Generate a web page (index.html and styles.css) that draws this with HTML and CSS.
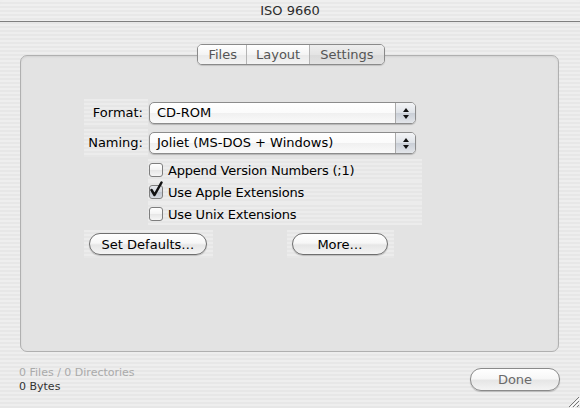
FILE: index.html
```html
<!DOCTYPE html>
<html lang="en">
<head>
    <meta charset="UTF-8">
    <title>ISO 9660</title>
    <link rel="stylesheet" href="styles.css">
</head>
<body>
<div class="window">
    <div class="titlebar">ISO 9660</div>

    <div class="tabs">
        <div class="tab">Files</div>
        <div class="tab">Layout</div>
        <div class="tab now">Settings</div>
    </div>

    <div class="group">
        <div class="form">
            <div class="label pin">Format:</div>
            <div class="field">
                <div class="popup">
                    <span class="value">CD-ROM</span>
                    <span class="arrows"><i class="up"></i><i class="down"></i></span>
                </div>
            </div>

            <div class="label pin">Naming:</div>
            <div class="field">
                <div class="popup">
                    <span class="value">Joliet (MS-DOS + Windows)</span>
                    <span class="arrows"><i class="up"></i><i class="down"></i></span>
                </div>
            </div>

            <div></div>
            <div class="checks">
                <label class="check pin"><span class="box"></span>Append Version Numbers (;1)</label>
                <label class="check pin"><span class="box on">
                    <svg width="15" height="17" viewBox="0 0 15 17"><path d="M2.5 9 L5.5 14 L12.5 1.5" fill="none" stroke="#111" stroke-width="2.5" stroke-linecap="round" stroke-linejoin="round"/></svg>
                </span>Use Apple Extensions</label>
                <label class="check pin"><span class="box"></span>Use Unix Extensions</label>
            </div>
        </div>

        <div class="actions">
            <div class="cell pin"><button class="btn defaults">Set Defaults…</button></div>
            <div class="cell pin"><button class="btn more">More…</button></div>
        </div>
    </div>

    <div class="footer">
        <div class="status">
            <div class="dim">0 Files / 0 Directories</div>
            <div>0 Bytes</div>
        </div>
        <button class="btn done">Done</button>
    </div>

    <!-- size grip in the corner -->
    <svg class="grip" width="14" height="14" viewBox="0 0 14 14">
        <path d="M13 3 L3 13 M13 7 L7 13 M13 11 L11 13" stroke="#777" stroke-width="1"/>
        <path d="M14 4 L4 14 M14 8 L8 14" stroke="#fff" stroke-width="1"/>
    </svg>
</div>
</body>
</html>
```

FILE: styles.css
```css
body{
    margin: 0;
    font-family: "DejaVu Sans", sans-serif;
    font-size: 12px;
    color: #000;
}
button{
    font-family: inherit;
}

/* 窗口 + 细条纹背景 */
.window{
    width: 580px;
    height: 408px;
    position: relative;
    overflow: hidden;
    display: flex;
    flex-direction: column;
    background: repeating-linear-gradient(to bottom, #eeeeee 0, #eeeeee 2px, #e7e7e7 2px, #e7e7e7 4px);
}
.pin{
    background: repeating-linear-gradient(to bottom, #ececec 0, #ececec 2px, #e6e6e6 2px, #e6e6e6 4px);
}

.titlebar{
    height: 21px;
    line-height: 21px;
    text-align: center;
    font-size: 13px;
    color: #2c2c2c;
    border-bottom: 1px solid #7f7f7f;
    border-radius: 5px 5px 0 0;
    background: repeating-linear-gradient(to bottom, #efefef 0, #efefef 2px, #e8e8e8 2px, #e8e8e8 4px);
}

/* 标签页 */
.tabs{
    align-self: center;
    margin: 22px 0 0 2px;
    height: 19px;
    display: flex;
    border: 1px solid #8a8a8a;
    border-radius: 5px;
    overflow: hidden;
    position: relative;
    z-index: 1;
    box-shadow: 0 1px 1px rgba(0,0,0,0.15);
}
.tab{
    line-height: 19px;
    font-size: 13px;
    color: #555;
    padding: 0 9px;
    background: linear-gradient(to bottom, #ffffff 0%, #f4f4f4 50%, #e9e9e9 51%, #f3f3f3 100%);
    border-left: 1px solid #b4b4b4;
}
.tab:first-child{
    border-left: 0;
    padding: 0 9px 0 10px;
}
.tab.now{
    padding: 0 10px;
    background: linear-gradient(to bottom, #eeeeee 0%, #e4e4e4 50%, #dadada 51%, #e2e2e2 100%);
}

/* 分组框 */
.group{
    margin: -10px 21px 0 20px;
    height: 297px;
    box-sizing: border-box;
    padding: 43px 0 0 63px;
    border: 1px solid #b0b0b0;
    border-radius: 7px;
    background: #e3e3e3;
    box-shadow: inset 0 1px 2px rgba(0,0,0,0.08);
}

.form{
    display: grid;
    grid-template-columns: 64px 274px;
    row-gap: 2px;
}
.label{
    height: 28px;
    line-height: 28px;
    text-align: right;
    padding-right: 5px;
    font-size: 13px;
}
.field{
    height: 28px;
    display: flex;
    align-items: center;
}

/* 下拉框 */
.popup{
    margin-left: 1px;
    width: 267px;
    height: 22px;
    box-sizing: border-box;
    display: flex;
    border: 1px solid #8c8c8c;
    border-radius: 5px;
    overflow: hidden;
    background: linear-gradient(to bottom, #ffffff 0%, #fbfbfb 50%, #f0f0f0 51%, #fafafa 100%);
    box-shadow: 0 1px 1px rgba(0,0,0,0.2);
}
.popup .value{
    flex: 1;
    padding-left: 7px;
    line-height: 20px;
    font-size: 13px;
}
.popup .arrows{
    width: 19px;
    border-left: 1px solid #a9a9a9;
    display: flex;
    flex-direction: column;
    align-items: center;
    justify-content: center;
    gap: 3px;
    background: linear-gradient(to bottom, #f3f4f6 0%, #dfe3e8 50%, #c9ced6 51%, #e3e6ea 100%);
}
.arrows i{
    width: 0;
    height: 0;
    border-left: 3px solid transparent;
    border-right: 3px solid transparent;
}
.arrows .up{
    border-bottom: 4px solid #111;
}
.arrows .down{
    border-top: 4px solid #111;
}

/* 复选框 */
.checks{
    display: flex;
    flex-direction: column;
    width: 274px;
}
.check{
    height: 22px;
    display: flex;
    align-items: center;
    font-size: 13px;
    letter-spacing: -0.2px;
}
.check .box{
    width: 14px;
    height: 14px;
    box-sizing: border-box;
    margin: 0 5px 0 1px;
    border: 1px solid #7e7e7e;
    border-radius: 3px;
    background: linear-gradient(to bottom, #ffffff 0%, #f3f3f3 50%, #e6e6e6 51%, #f6f6f6 100%);
    position: relative;
}
.check .box svg{
    position: absolute;
    left: -1px;
    top: -5px;
}
.check .box.on{
    background: linear-gradient(to bottom, #e6e8ec 0%, #d3d7de 50%, #bfc5cf 51%, #d6dae0 100%);
}

/* 按钮 */
.actions{
    display: flex;
    margin-top: 5px;
    gap: 74px;
}
.cell{
    height: 28px;
    display: flex;
    align-items: center;
    padding: 0 6px 0 5px;
}
.btn{
    height: 22px;
    box-sizing: border-box;
    border: 1px solid #6f6f6f;
    border-radius: 11px;
    font-size: 13px;
    color: #000;
    padding: 0;
    background: linear-gradient(to bottom, #ffffff 0%, #f7f7f7 45%, #e6e6e6 55%, #f4f4f4 100%);
    box-shadow: 0 1px 1px rgba(0,0,0,0.2);
}
.btn.defaults{
    width: 118px;
}
.btn.more{
    width: 96px;
}

/* 底部状态 */
.footer{
    display: flex;
    justify-content: space-between;
    align-items: flex-start;
    margin: 14px 20px 0 19px;
}
.status{
    font-size: 11px;
    line-height: 14px;
    color: #333;
}
.status .dim{
    color: #aaa;
}
.btn.done{
    width: 90px;
    height: 23px;
    margin-top: 2px;
    color: #6a6a6a;
    border-color: #8a8a8a;
}

.grip{
    position: absolute;
    right: 0;
    bottom: 0;
}
```
